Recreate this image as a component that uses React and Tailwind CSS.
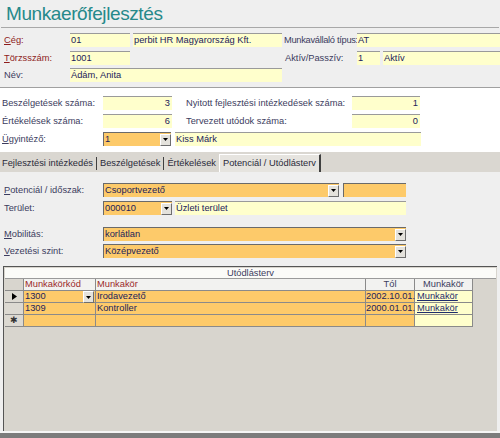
import React from 'react';

const FONT = { fontFamily: '"Liberation Sans", Arial, sans-serif' };

function Label({ w, children, red, ul, tight }) {
  const first = children[0];
  const rest = children.slice(1);
  return (
    <div className={`${w} shrink-0 h-[14px] leading-[14px] text-[9.3px] whitespace-nowrap ${tight ? 'tracking-[-0.3px]' : ''} ${red ? 'text-[#8e1c1c]' : 'text-[#3c3c5e]'}`}>
      {ul ? <span className="underline">{first}</span> : first}
      {rest}
    </div>
  );
}

function Field({ w, bg = 'bg-[#ffffcc]', right, children }) {
  return (
    <div
      className={`${w} ${bg} shrink-0 h-[14px] leading-[13px] text-[9.3px] text-[#22225a] border-t border-[#9a9a9a] px-[1px] whitespace-nowrap overflow-hidden ${right ? 'text-right pr-[2px]' : ''}`}
    >
      {children}
    </div>
  );
}

function DropBtn() {
  return (
    <div className="w-[11px] h-[12px] shrink-0 bg-[#e4e2dc] border border-t-[#ffffff] border-l-[#ffffff] border-r-[#6e6e6e] border-b-[#6e6e6e] flex items-center justify-center">
      <svg width="5" height="3" viewBox="0 0 5 3">
        <path d="M0 0 L5 0 L2.5 3 Z" fill="#000" />
      </svg>
    </div>
  );
}

function Combo({ w, children }) {
  return (
    <div className={`${w} shrink-0 h-[14px] bg-[#fdca6a] border-t border-l border-[#6a6a6a] flex items-center justify-between text-[9.3px] text-[#22225a] whitespace-nowrap overflow-hidden`}>
      <span className="pl-[1px] leading-[13px]">{children}</span>
      <DropBtn />
    </div>
  );
}

const GRID_ROWS = [
  { code: '1300', name: 'Irodavezető', date: '2002.10.01.', current: true },
  { code: '1309', name: 'Kontroller', date: '2000.01.01.' },
];

export default function App() {
  return (
    <div className="w-[500px] h-[438px] overflow-hidden bg-[#efefef] flex flex-col" style={FONT}>
      {/* title */}
      <div className="h-[28px] shrink-0 border-b border-[#a8a8a8] mx-[1px] flex items-center pl-[5px]">
        <span className="text-[19px] leading-[22px] tracking-[-0.4px] text-[#26898a]">Munkaerőfejlesztés</span>
      </div>

      {/* header section */}
      <div className="h-[60px] shrink-0 border-b border-[#a0a0a0] pt-[5px] flex flex-col gap-[3px]">
        <div className="flex pl-[4px]">
          <Label w="w-[66px]" red ul>Cég:</Label>
          <Field w="w-[60px]">01</Field>
          <div className="w-[3px]" />
          <Field w="w-[149px]">perbit HR Magyarország Kft.</Field>
          <div className="w-[2px]" />
          <Label w="w-[73px]" tight>Munkavállaló típus:</Label>
          <Field w="w-[143px]">AT</Field>
        </div>
        <div className="flex pl-[4px] mt-[1px]">
          <Label w="w-[66px]" red ul>Törzsszám:</Label>
          <Field w="w-[60px]">1001</Field>
          <div className="w-[155px]" />
          <Label w="w-[72px]">Aktív/Passzív:</Label>
          <Field w="w-[23px]">1</Field>
          <div className="w-[3px]" />
          <Field w="w-[117px]">Aktív</Field>
        </div>
        <div className="flex pl-[4px]">
          <Label w="w-[66px]">Név:</Label>
          <Field w="w-[212px]">Ádám, Anita</Field>
        </div>
      </div>

      {/* counts section */}
      <div className="h-[64px] shrink-0 bg-[#ffffff] pt-[8px] flex flex-col gap-[4px]">
        <div className="flex pl-[2px]">
          <Label w="w-[101px]">Beszélgetések száma:</Label>
          <Field w="w-[69px]" right>3</Field>
          <div className="w-[14px]" />
          <Label w="w-[166px]">Nyitott fejlesztési intézkedések száma:</Label>
          <Field w="w-[68px]" right>1</Field>
        </div>
        <div className="flex pl-[2px]">
          <Label w="w-[101px]">Értékelések száma:</Label>
          <Field w="w-[69px]" right>6</Field>
          <div className="w-[14px]" />
          <Label w="w-[166px]">Tervezett utódok száma:</Label>
          <Field w="w-[68px]" right>0</Field>
        </div>
        <div className="flex pl-[2px]">
          <Label w="w-[101px]" ul>Ügyintéző:</Label>
          <Combo w="w-[68px]">1</Combo>
          <div className="w-[4px]" />
          <Field w="w-[246px]">Kiss Márk</Field>
        </div>
      </div>

      {/* tabs */}
      <div className="h-[20px] shrink-0 bg-[#dad7d1] flex items-end pl-[2px] text-[9.3px] text-[#2a2a3a]">
        <div className="h-[17px] leading-[16px] pr-[3px]">Fejlesztési intézkedés</div>
        <div className="w-[1px] h-[13px] mb-[2px] bg-[#404040]" />
        <div className="h-[17px] leading-[16px] px-[3px]">Beszélgetések</div>
        <div className="w-[1px] h-[13px] mb-[2px] bg-[#404040]" />
        <div className="h-[17px] leading-[16px] px-[3px]">Értékelések</div>
        <div className="h-[18px] leading-[16px] px-[3px] bg-[#e6e4df] border border-t-[#ffffff] border-l-[#ffffff] border-r-[#404040] border-b-0 border-r-2">
          Potenciál / Utódlásterv
        </div>
      </div>

      {/* tab page */}
      <div className="flex-1 flex flex-col pt-[11px]">
        <div className="flex pl-[4px]">
          <Label w="w-[99px]" ul>Potenciál / időszak:</Label>
          <Combo w="w-[236px]">Csoportvezető</Combo>
          <div className="w-[4px]" />
          <div className="w-[63px] h-[14px] bg-[#fdca6a] border-t border-l border-[#6a6a6a]" />
        </div>
        <div className="flex pl-[4px] mt-[4px]">
          <Label w="w-[99px]">Terület:</Label>
          <Combo w="w-[69px]">000010</Combo>
          <div className="w-[3px]" />
          <Field w="w-[231px]">Üzleti terület</Field>
        </div>
        <div className="flex pl-[4px] mt-[12px]">
          <Label w="w-[99px]" ul>Mobilitás:</Label>
          <Combo w="w-[303px]">korlátlan</Combo>
        </div>
        <div className="flex pl-[4px] mt-[3px]">
          <Label w="w-[99px]" ul>Vezetési szint:</Label>
          <Combo w="w-[303px]">Középvezető</Combo>
        </div>

        {/* subform */}
        <div className="mt-[8px] ml-[3px] mr-[3px] h-[165px] shrink-0 border-l border-t border-[#555555] bg-[#d8d5ce] flex flex-col">
          <div className="h-[11px] mx-[1px] mt-[1px] bg-[#fbfbf8] border-b border-[#9a9a9a] text-center text-[9.3px] leading-[11px] text-[#3c3c5e]">
            Utódlásterv
          </div>
          <div className="flex text-[9.3px] h-[12px] leading-[11px]">
            <div className="w-[19px] ml-[1px] bg-[#d8d5ce] border-r border-b border-[#8a8a8a]" />
            <div className="w-[72px] bg-[#f2f2f0] border-r border-b border-[#8a8a8a] text-[#9a2a2a] pl-[1px]">Munkakörkód</div>
            <div className="w-[270px] bg-[#f2f2f0] border-r border-b border-[#8a8a8a] text-[#9a2a2a] pl-[1px]">Munkakör</div>
            <div className="w-[49px] bg-[#f2f2f0] border-r border-b border-[#8a8a8a] text-[#3c3c5e] text-center">Tól</div>
            <div className="w-[58px] bg-[#f2f2f0] border-r border-b border-[#8a8a8a] text-[#3c3c5e] text-center">Munkakör</div>
          </div>
          {GRID_ROWS.map((r) => (
            <div key={r.code} className="flex text-[9.3px] h-[12px] leading-[11px] text-[#22225a]">
              <div className="w-[19px] ml-[1px] bg-[#dcd9d2] border-r border-b border-[#8a8a8a] flex items-center justify-center">
                {r.current && (
                  <svg width="5" height="7" viewBox="0 0 5 7">
                    <path d="M0 0 L5 3.5 L0 7 Z" fill="#000" />
                  </svg>
                )}
              </div>
              <div className="w-[72px] bg-[#fdca6a] border-r border-b border-[#8a8a8a] pl-[1px] flex justify-between">
                <span>{r.code}</span>
                {r.current && <div className="mr-[1px]"><DropBtn /></div>}
              </div>
              <div className="w-[270px] bg-[#fdca6a] border-r border-b border-[#8a8a8a] pl-[1px]">{r.name}</div>
              <div className="w-[49px] bg-[#fdca6a] border-r border-b border-[#8a8a8a] text-right pr-[1px]">{r.date}</div>
              <div className="w-[58px] bg-[#ffffcc] border-r border-b border-[#8a8a8a] pl-[2px] underline text-[#1e2c6c]">Munkakör</div>
            </div>
          ))}
          <div className="flex text-[9.3px] h-[12px] leading-[11px]">
            <div className="w-[19px] ml-[1px] bg-[#dcd9d2] border-r border-b border-[#8a8a8a] flex items-center justify-center text-[9px] text-[#333]">✱</div>
            <div className="w-[72px] bg-[#fdca6a] border-r border-b border-[#8a8a8a]" />
            <div className="w-[270px] bg-[#fdca6a] border-r border-b border-[#8a8a8a]" />
            <div className="w-[49px] bg-[#fdca6a] border-r border-b border-[#8a8a8a]" />
            <div className="w-[58px] bg-[#ffffcc] border-r border-b border-[#8a8a8a]" />
          </div>
        </div>
        <div className="h-[2px] shrink-0 bg-[#f6f6f6]" />
        <div className="flex-1 bg-[#7c7c7c]" />
      </div>
    </div>
  );
}
